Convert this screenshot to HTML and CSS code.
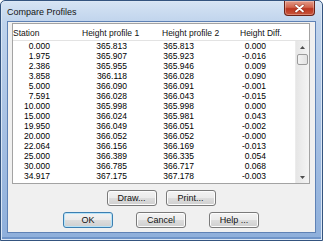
FILE: index.html
```html
<!DOCTYPE html>
<html lang="en">
<head>
  <meta charset="UTF-8" />
  <title>Compare Profiles</title>
  <link rel="stylesheet" href="styles.css">
</head>
<body>

  <div class="window">
    <div class="titlebar">
      <span class="title">Compare Profiles</span>
      <div class="close">
        <svg width="11" height="9" viewBox="0 0 11 9">
          <path d="M2 1.5 L9 7.5 M9 1.5 L2 7.5" stroke="#5a140a" stroke-width="3" stroke-linecap="round" opacity="0.45"/>
          <path d="M2 1.5 L9 7.5 M9 1.5 L2 7.5" stroke="#fff" stroke-width="1.8" stroke-linecap="round"/>
        </svg>
      </div>
    </div>

    <div class="client">
      <div class="list">
        <div class="list-head">
          <span>Station</span>
          <span>Height profile 1</span>
          <span>Height profile 2</span>
          <span>Height Diff.</span>
        </div>
        <div class="list-body">
          <div class="rows">
            <div class="row"><span>0.000</span><span>365.813</span><span>365.813</span><span>0.000</span></div>
            <div class="row"><span>1.975</span><span>365.907</span><span>365.923</span><span>-0.016</span></div>
            <div class="row"><span>2.386</span><span>365.955</span><span>365.946</span><span>0.009</span></div>
            <div class="row"><span>3.858</span><span>366.118</span><span>366.028</span><span>0.090</span></div>
            <div class="row"><span>5.000</span><span>366.090</span><span>366.091</span><span>-0.001</span></div>
            <div class="row"><span>7.591</span><span>366.028</span><span>366.043</span><span>-0.015</span></div>
            <div class="row"><span>10.000</span><span>365.998</span><span>365.998</span><span>0.000</span></div>
            <div class="row"><span>15.000</span><span>366.024</span><span>365.981</span><span>0.043</span></div>
            <div class="row"><span>19.950</span><span>366.049</span><span>366.051</span><span>-0.002</span></div>
            <div class="row"><span>20.000</span><span>366.052</span><span>366.052</span><span>-0.000</span></div>
            <div class="row"><span>22.064</span><span>366.156</span><span>366.169</span><span>-0.013</span></div>
            <div class="row"><span>25.000</span><span>366.389</span><span>366.335</span><span>0.054</span></div>
            <div class="row"><span>30.000</span><span>366.785</span><span>366.717</span><span>0.068</span></div>
            <div class="row"><span>34.917</span><span>367.175</span><span>367.178</span><span>-0.003</span></div>
          </div>
          <div class="scrollbar">
            <div class="arrow">
              <svg width="5" height="3" viewBox="0 0 5 3"><path d="M0 3 L2.5 0 L5 3 Z" fill="#4d4d4d"/></svg>
            </div>
            <div class="track">
              <div class="thumb"></div>
            </div>
            <div class="arrow">
              <svg width="5" height="3" viewBox="0 0 5 3"><path d="M0 0 L5 0 L2.5 3 Z" fill="#4d4d4d"/></svg>
            </div>
          </div>
        </div>
      </div>

      <div class="buttons">
        <button class="btn">Draw...</button>
        <button class="btn">Print...</button>
      </div>
      <div class="buttons wide">
        <button class="btn default">OK</button>
        <button class="btn">Cancel</button>
        <button class="btn">Help ...</button>
      </div>
    </div>
  </div>

</body>
</html>
```

FILE: styles.css
```css
* {
  margin: 0;
  padding: 0;
  box-sizing: border-box;
}

html, body {
  width: 323px;
  height: 241px;
  overflow: hidden;
  background: #ffffff;
  font-family: 'Liberation Sans', Arial, sans-serif;
  color: #000;
}

.window {
  width: 323px;
  height: 241px;
  border: 1px solid #34547f;
  border-radius: 5px 5px 0 0;
  background: linear-gradient(#d6e4f4, #bfd3ec 22px, #a6c0e3 130px, #8eafdb);
  padding: 0 6px 7px 6px;
  display: flex;
  flex-direction: column;
  box-shadow: inset 0 0 0 1px #dbe7f5, inset 0 -3px 0 #6f94c8;
}

.titlebar {
  height: 20px;
  display: flex;
  align-items: flex-start;
}

.title {
  font-size: 9px;
  margin-top: 6px;
  color: #141414;
}

.close {
  margin-left: auto;
  margin-right: 1px;
  width: 31px;
  height: 15px;
  border: 1px solid #6b2216;
  border-top: none;
  border-radius: 0 0 4px 4px;
  background: linear-gradient(#e39a88, #d1654d 45%, #bb3620 55%, #c9553b);
  display: flex;
  align-items: center;
  justify-content: center;
  box-shadow: inset 0 0 0 1px rgba(255, 255, 255, 0.3);
}

.client {
  flex: 1;
  background: #f0f0f0;
  border: 1px solid #5f82b5;
  padding: 1px 5px 0 4px;
  display: flex;
  flex-direction: column;
}

.list {
  height: 161px;
  border: 1px solid #a3a3a3;
  background: #fff;
  display: flex;
  flex-direction: column;
  font-size: 8.5px;
}

.list-head {
  height: 17px;
  padding-top: 2px;
  display: grid;
  grid-template-columns: 69px 80px 78px 1fr;
  align-items: center;
  border-bottom: 1px solid #e3e3e3;
  color: #111;
}

.list-body {
  flex: 1;
  display: flex;
}

.rows {
  flex: 1;
}

.row {
  height: 10px;
  line-height: 10px;
  display: grid;
  grid-template-columns: 37px 77px 67px 72px;
}

.row span {
  text-align: right;
}

.scrollbar {
  width: 14px;
  display: flex;
  flex-direction: column;
  background: linear-gradient(90deg, #e6e6e6, #f4f4f4);
  border-left: 1px solid #ececec;
}

.arrow {
  height: 12px;
  display: flex;
  align-items: center;
  justify-content: center;
}

.track {
  flex: 1;
  padding: 1px 1px 0 1px;
}

.thumb {
  height: 11px;
  border: 1px solid #9b9b9b;
  border-radius: 2px;
  background: linear-gradient(90deg, #f3f3f3, #e2e2e2);
}

.buttons {
  display: flex;
  justify-content: center;
  gap: 9px;
  margin-top: 6px;
}

.buttons.wide {
  gap: 23px;
  margin-top: 6px;
}

.btn {
  width: 50px;
  height: 16px;
  font-family: 'Liberation Sans', Arial, sans-serif;
  font-size: 9px;
  color: #111;
  border: 1px solid #7a7a7a;
  border-radius: 3px;
  background: linear-gradient(#f3f3f3, #ebebeb 50%, #dddddd 51%, #cfcfcf);
  box-shadow: inset 0 0 0 1px #fcfcfc;
}

.btn.default {
  border-color: #3c7fb1;
  box-shadow: inset 0 0 0 1px #b7e3f8;
}
```
